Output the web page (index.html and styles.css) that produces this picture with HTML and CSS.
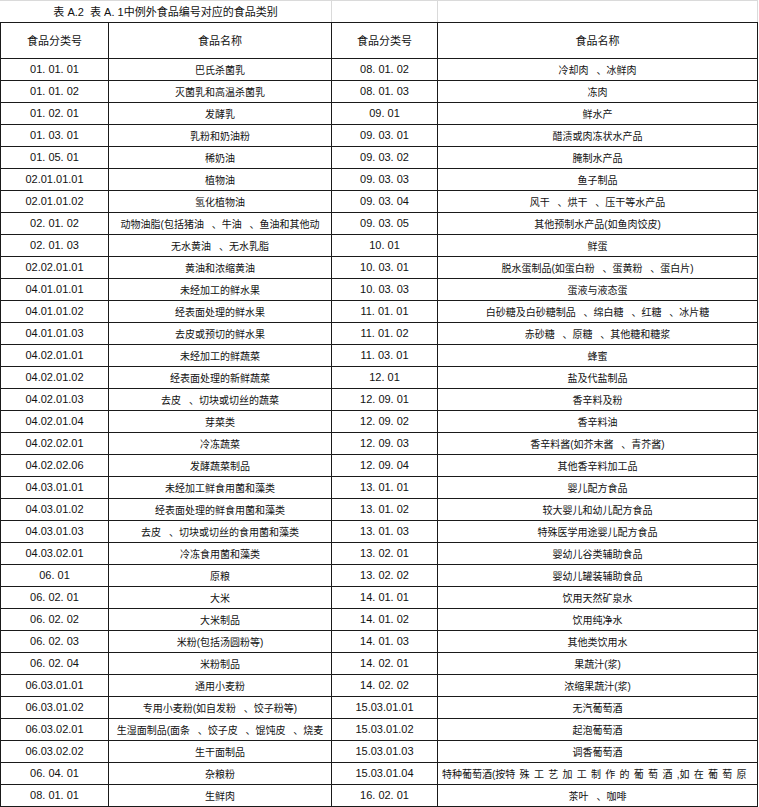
FILE: index.html
```html
<!DOCTYPE html>
<html lang="zh-CN">
<head>
<meta charset="utf-8">
<title>表 A.2 表 A.1中例外食品编号对应的食品类别</title>
<link rel="stylesheet" href="styles.css">
</head>
<body>
<div class="sheet">
  <div class="title-row">
    <div class="title-cell title">表 A.2&nbsp;&nbsp;表 A. 1中例外食品编号对应的食品类别</div>
    <div class="title-cell"></div>
    <div class="title-cell"></div>
  </div>
  <div class="grid">
    <div class="hd">食品分类号</div><div class="hd">食品名称</div><div class="hd">食品分类号</div><div class="hd">食品名称</div>

    <div class="code">01. 01. 01</div><div class="name">巴氏杀菌乳</div><div class="code">08. 01. 02</div><div class="name">冷却肉 、冰鲜肉</div>
    <div class="code">01. 01. 02</div><div class="name">灭菌乳和高温杀菌乳</div><div class="code">08. 01. 03</div><div class="name">冻肉</div>
    <div class="code">01. 02. 01</div><div class="name">发酵乳</div><div class="code">09. 01</div><div class="name">鲜水产</div>
    <div class="code">01. 03. 01</div><div class="name">乳粉和奶油粉</div><div class="code">09. 03. 01</div><div class="name">醋渍或肉冻状水产品</div>
    <div class="code">01. 05. 01</div><div class="name">稀奶油</div><div class="code">09. 03. 02</div><div class="name">腌制水产品</div>
    <div class="code">02.01.01.01</div><div class="name">植物油</div><div class="code">09. 03. 03</div><div class="name">鱼子制品</div>
    <div class="code">02.01.01.02</div><div class="name">氢化植物油</div><div class="code">09. 03. 04</div><div class="name">风干 、烘干 、压干等水产品</div>
    <div class="code">02. 01. 02</div><div class="name">动物油脂(包括猪油 、牛油 、鱼油和其他动物脂肪等)</div><div class="code">09. 03. 05</div><div class="name">其他预制水产品(如鱼肉饺皮)</div>
    <div class="code">02. 01. 03</div><div class="name">无水黄油 、无水乳脂</div><div class="code">10. 01</div><div class="name">鲜蛋</div>
    <div class="code">02.02.01.01</div><div class="name">黄油和浓缩黄油</div><div class="code">10. 03. 01</div><div class="name">脱水蛋制品(如蛋白粉 、蛋黄粉 、蛋白片)</div>
    <div class="code">04.01.01.01</div><div class="name">未经加工的鲜水果</div><div class="code">10. 03. 03</div><div class="name">蛋液与液态蛋</div>
    <div class="code">04.01.01.02</div><div class="name">经表面处理的鲜水果</div><div class="code">11. 01. 01</div><div class="name">白砂糖及白砂糖制品 、绵白糖 、红糖 、冰片糖</div>
    <div class="code">04.01.01.03</div><div class="name">去皮或预切的鲜水果</div><div class="code">11. 01. 02</div><div class="name">赤砂糖 、原糖 、其他糖和糖浆</div>
    <div class="code">04.02.01.01</div><div class="name">未经加工的鲜蔬菜</div><div class="code">11. 03. 01</div><div class="name">蜂蜜</div>
    <div class="code">04.02.01.02</div><div class="name">经表面处理的新鲜蔬菜</div><div class="code">12. 01</div><div class="name">盐及代盐制品</div>
    <div class="code">04.02.01.03</div><div class="name">去皮 、切块或切丝的蔬菜</div><div class="code">12. 09. 01</div><div class="name">香辛料及粉</div>
    <div class="code">04.02.01.04</div><div class="name">芽菜类</div><div class="code">12. 09. 02</div><div class="name">香辛料油</div>
    <div class="code">04.02.02.01</div><div class="name">冷冻蔬菜</div><div class="code">12. 09. 03</div><div class="name">香辛料酱(如芥末酱 、青芥酱)</div>
    <div class="code">04.02.02.06</div><div class="name">发酵蔬菜制品</div><div class="code">12. 09. 04</div><div class="name">其他香辛料加工品</div>
    <div class="code">04.03.01.01</div><div class="name">未经加工鲜食用菌和藻类</div><div class="code">13. 01. 01</div><div class="name">婴儿配方食品</div>
    <div class="code">04.03.01.02</div><div class="name">经表面处理的鲜食用菌和藻类</div><div class="code">13. 01. 02</div><div class="name">较大婴儿和幼儿配方食品</div>
    <div class="code">04.03.01.03</div><div class="name">去皮 、切块或切丝的食用菌和藻类</div><div class="code">13. 01. 03</div><div class="name">特殊医学用途婴儿配方食品</div>
    <div class="code">04.03.02.01</div><div class="name">冷冻食用菌和藻类</div><div class="code">13. 02. 01</div><div class="name">婴幼儿谷类辅助食品</div>
    <div class="code">06. 01</div><div class="name">原粮</div><div class="code">13. 02. 02</div><div class="name">婴幼儿罐装辅助食品</div>
    <div class="code">06. 02. 01</div><div class="name">大米</div><div class="code">14. 01. 01</div><div class="name">饮用天然矿泉水</div>
    <div class="code">06. 02. 02</div><div class="name">大米制品</div><div class="code">14. 01. 02</div><div class="name">饮用纯净水</div>
    <div class="code">06. 02. 03</div><div class="name">米粉(包括汤圆粉等)</div><div class="code">14. 01. 03</div><div class="name">其他类饮用水</div>
    <div class="code">06. 02. 04</div><div class="name">米粉制品</div><div class="code">14. 02. 01</div><div class="name">果蔬汁(浆)</div>
    <div class="code">06.03.01.01</div><div class="name">通用小麦粉</div><div class="code">14. 02. 02</div><div class="name">浓缩果蔬汁(浆)</div>
    <div class="code">06.03.01.02</div><div class="name">专用小麦粉(如自发粉 、饺子粉等)</div><div class="code">15.03.01.01</div><div class="name">无汽葡萄酒</div>
    <div class="code">06.03.02.01</div><div class="name">生湿面制品(面条 、饺子皮 、馄饨皮 、烧麦皮)</div><div class="code">15.03.01.02</div><div class="name">起泡葡萄酒</div>
    <div class="code">06.03.02.02</div><div class="name">生干面制品</div><div class="code">15.03.01.03</div><div class="name">调香葡萄酒</div>
    <div class="code">06. 04. 01</div><div class="name">杂粮粉</div><div class="code">15.03.01.04</div><div class="name spread-cell"><span class="spread">特种葡萄酒(按特 殊 工 艺 加 工 制 作 的 葡 萄 酒 ,如 在 葡 萄 原 酒 中 加 入 白 兰 地 、浓 缩 葡 萄 汁 等)</span></div>
    <div class="code">08. 01. 01</div><div class="name">生鲜肉</div><div class="code">16. 02. 01</div><div class="name">茶叶 、咖啡</div>
  </div>
</div>
</body>
</html>
```

FILE: styles.css
```css
html, body {
  margin: 0;
  padding: 0;
  background: #ffffff;
}

body {
  font-family: "Liberation Sans", "Noto Sans CJK SC", sans-serif;
  color: #111111;
}

.sheet {
  width: 758px;
}

.title-row {
  display: grid;
  grid-template-columns: 332px 106px 320px;
  height: 22px;
  box-sizing: border-box;
  border-top: 1px solid #dadada;
}

.title-cell {
  border-right: 1px solid #dadada;
  box-sizing: border-box;
}

.title {
  font-size: 11px;
  line-height: 13px;
  text-align: center;
  padding-top: 5px;
  white-space: nowrap;
}

.grid {
  display: grid;
  grid-template-columns: 107px 222px 105px 319px;
  grid-template-rows: 35px repeat(34, 21px);
  gap: 1px;
  padding: 1px;
  background: #1a1a1a;
}

.grid > div {
  background: #ffffff;
  overflow: hidden;
}

.hd {
  display: flex;
  align-items: center;
  justify-content: center;
  font-size: 11px;
  line-height: 13px;
  padding-top: 2px;
  box-sizing: border-box;
}

.code {
  display: flex;
  align-items: center;
  justify-content: center;
  font-size: 11px;
  line-height: 13px;
  white-space: pre;
}

.name {
  font-size: 10px;
  line-height: 15px;
  text-align: center;
  padding: 3.5px 7px 0;
  box-sizing: border-box;
  word-spacing: 5px;
}

.spread-cell {
  text-align: left;
  padding: 3.5px 0 0 4px;
}

.spread {
  display: block;
  width: 309px;
  overflow: hidden;
  white-space: nowrap;
  word-spacing: 1.5px;
}
```
